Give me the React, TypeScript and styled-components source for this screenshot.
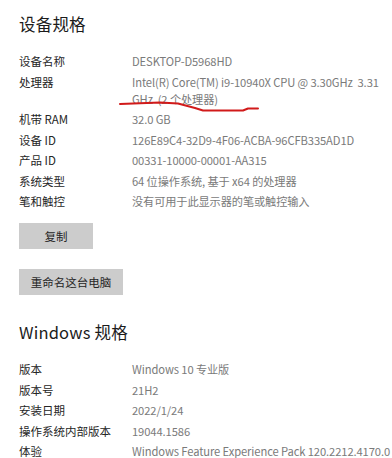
import React from "react";
import styled, { createGlobalStyle } from "styled-components";

const GlobalStyle = createGlobalStyle`
  html, body { margin: 0; padding: 0; background: #ffffff; }
  body { font-family: "Noto Sans CJK SC", "Noto Sans", sans-serif; }
`;

const Page = styled.div`
  position: relative;
  width: 392px;
  height: 458px;
  overflow: hidden;
  padding: 11px 0 0 19px;
  box-sizing: border-box;
  background: #fff;
`;

const SectionTitle = styled.h2<{ $top?: number }>`
  margin: ${(p) => p.$top ?? 0}px 0 0 0;
  font-size: 16.5px;
  font-weight: 400;
  line-height: 26px;
  color: #1b1b1b;
  letter-spacing: 0.2px;
`;

const SpecList = styled.dl`
  display: grid;
  grid-template-columns: 113px 1fr;
  row-gap: 3.5px;
  margin: 16px 0 0 0;
  font-size: 11.5px;
  line-height: 17px;
`;

const Label = styled.dt`
  margin: 0;
  color: #262626;
  white-space: nowrap;
`;

const Value = styled.dd`
  margin: 0;
  color: #7a7a7a;
  font-size: 11.2px;
  letter-spacing: -0.1px;
  white-space: nowrap;
`;

const Button = styled.button<{ $width: number }>`
  display: block;
  width: ${(p) => p.$width}px;
  height: 26px;
  padding: 0;
  border: none;
  background: #cccccc;
  color: #262626;
  font-family: "Noto Sans CJK SC", sans-serif;
  font-size: 11.5px;
  cursor: pointer;
`;

const ButtonStack = styled.div`
  display: flex;
  flex-direction: column;
  gap: 20px;
  margin-top: 13px;
`;

const Annotation = styled.svg`
  position: absolute;
  left: 0;
  top: 0;
  pointer-events: none;
`;

type Row = [string, React.ReactNode];

const deviceRows: Row[] = [
  ["设备名称", "DESKTOP-D5968HD"],
  [
    "处理器",
    <>
      Intel(R) Core(TM) i9-10940X CPU @ 3.30GHz{"\u00a0 "}3.31
      <br />
      GHz{"\u00a0 "}(2 个处理器)
    </>,
  ],
  ["机带 RAM", "32.0 GB"],
  ["设备 ID", "126E89C4-32D9-4F06-ACBA-96CFB335AD1D"],
  ["产品 ID", "00331-10000-00001-AA315"],
  ["系统类型", "64 位操作系统, 基于 x64 的处理器"],
  ["笔和触控", "没有可用于此显示器的笔或触控输入"],
];

const windowsRows: Row[] = [
  ["版本", "Windows 10 专业版"],
  ["版本号", "21H2"],
  ["安装日期", "2022/1/24"],
  ["操作系统内部版本", "19044.1586"],
  ["体验", "Windows Feature Experience Pack 120.2212.4170.0"],
];

function Specs({ rows }: { rows: Row[] }) {
  return (
    <SpecList>
      {rows.map(([k, v]) => (
        <React.Fragment key={k}>
          <Label>{k}</Label>
          <Value>{v}</Value>
        </React.Fragment>
      ))}
    </SpecList>
  );
}

export default function App() {
  return (
    <>
      <GlobalStyle />
      <Page>
        <SectionTitle>设备规格</SectionTitle>
        <Specs rows={deviceRows} />
        <ButtonStack>
          <Button $width={74}>复制</Button>
          <Button $width={104}>重命名这台电脑</Button>
        </ButtonStack>
        <SectionTitle $top={24}>Windows 规格</SectionTitle>
        <Specs rows={windowsRows} />
        <Annotation width="392" height="458" viewBox="0 0 392 458">
          <path
            d="M120 104 L160 102.5 L178 103.5 L195 108 L203 110.5 L243 110.5 L248 108.5 L258 108.5"
            fill="none"
            stroke="#d11a1a"
            strokeWidth="2"
            strokeLinecap="round"
            strokeLinejoin="round"
          />
        </Annotation>
      </Page>
    </>
  );
}
